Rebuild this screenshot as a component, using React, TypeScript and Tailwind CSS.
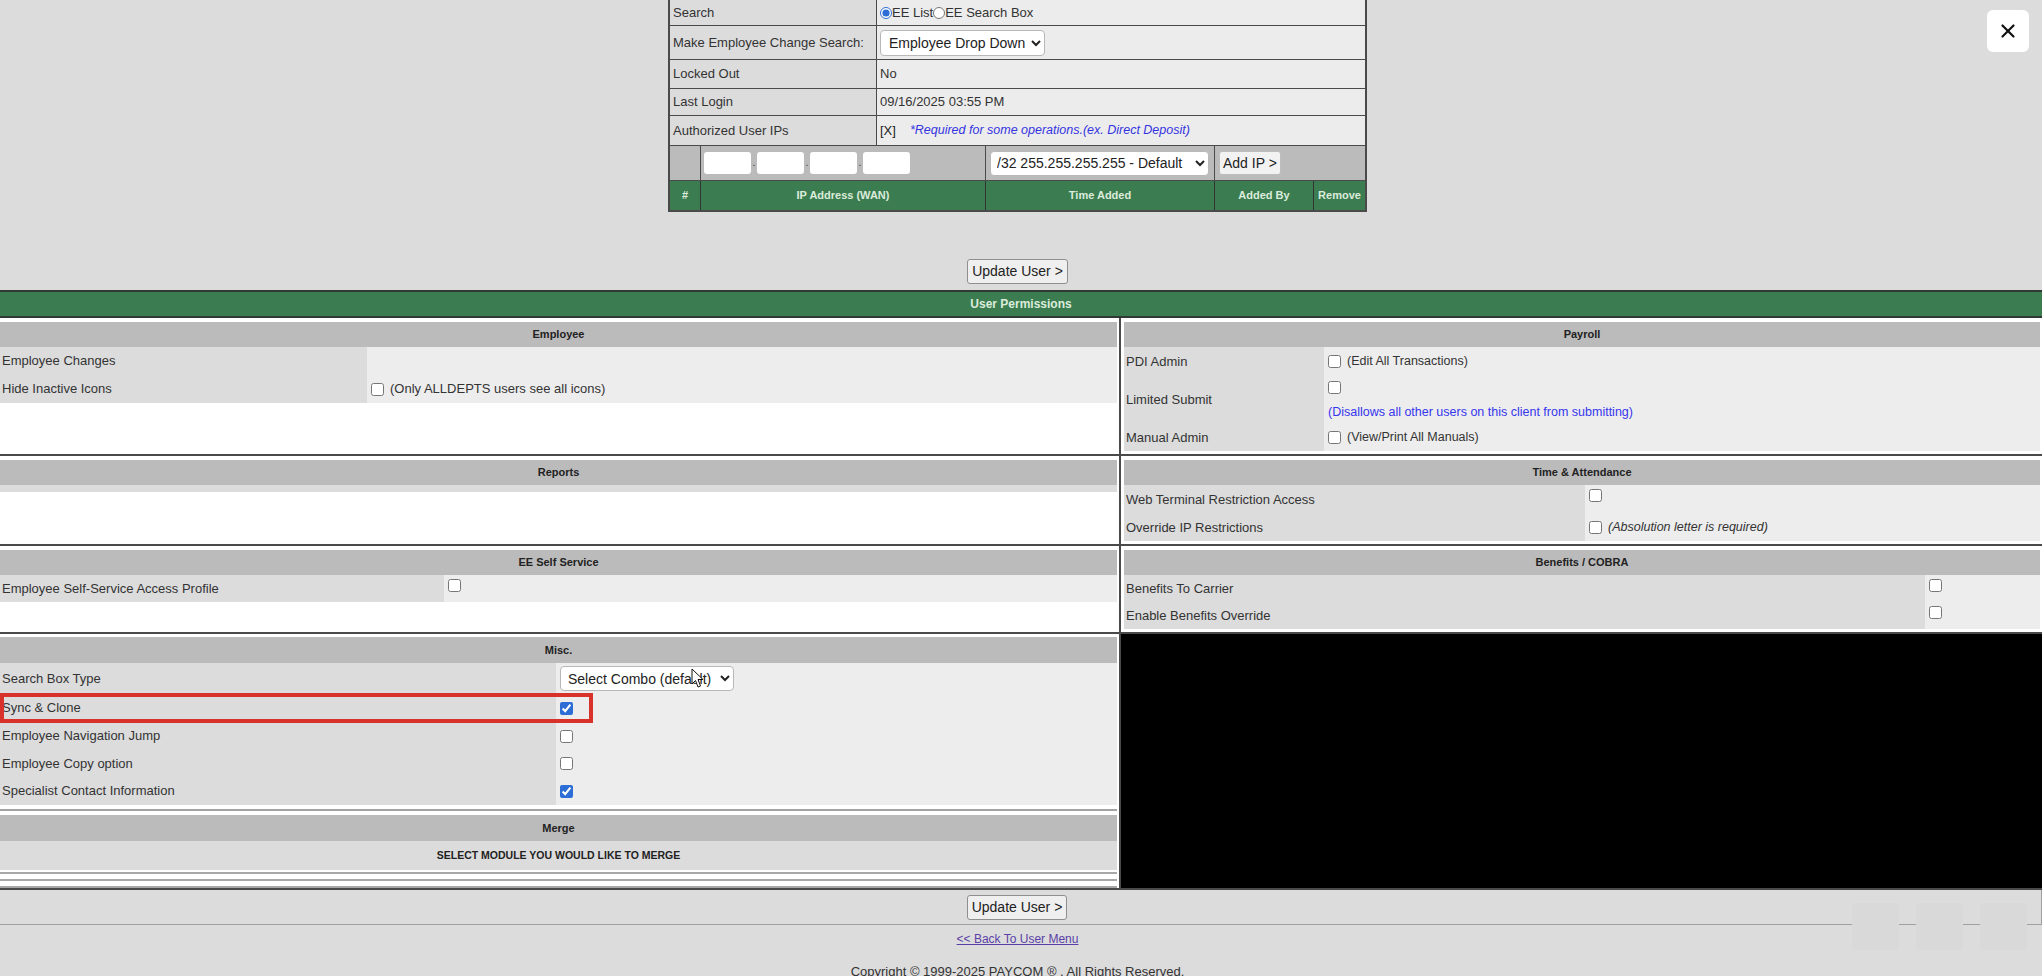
import React from 'react';
import { X } from 'lucide-react';

type RowProps = {
  label: string;
  labelW: string;
  h?: string;
  top?: boolean;
  children?: React.ReactNode;
};

const Row: React.FC<RowProps> = ({ label, labelW, h = 'h-[28px]', top = false, children }) => (
  <div className={`flex ${h}`}>
    <div className={`flex ${labelW} shrink-0 items-center bg-[#dcdcdc] pl-[2px]`}>{label}</div>
    <div className={`flex flex-1 gap-[6px] bg-[#ededed] pl-[4px] ${top ? 'items-start pt-[4px]' : 'items-center'}`}>
      {children}
    </div>
  </div>
);

const Header: React.FC<{ title: string; h?: string }> = ({ title, h = 'h-[25px]' }) => (
  <div className={`flex ${h} items-center justify-center bg-[#bbbbbb] text-[11px] font-bold text-[#222]`}>{title}</div>
);

const Check: React.FC<{ on?: boolean }> = ({ on = false }) => (
  <input type="checkbox" defaultChecked={on} className="m-0 h-[13px] w-[13px] shrink-0 accent-[#2c6ed5]" />
);

const UpdateButton = () => (
  <button className="h-[25px] rounded-[3px] border border-[#8f8f8f] bg-[#efefef] px-[4px] text-[14px] text-[#222]">
    Update User &gt;
  </button>
);

const InfoRow: React.FC<{ label: string; h: string; children?: React.ReactNode }> = ({ label, h, children }) => (
  <div className={`flex ${h} border-b border-[#4a4a4a]`}>
    <div className="flex w-[207px] shrink-0 items-center border-r border-[#4a4a4a] bg-[#dcdcdc] pl-[3px]">{label}</div>
    <div className="flex flex-1 items-center bg-[#ececec] pl-[3px]">{children}</div>
  </div>
);

export default function App() {
  return (
    <div className="relative min-h-[976px] w-full overflow-hidden bg-[#dcdcdc] font-['Liberation_Sans',Arial,sans-serif] text-[13px] text-[#333]">
      {/* user details */}
      <div className="flex justify-center pr-[7px]">
        <div className="w-[699px] border-x-2 border-b-2 border-[#4a4a4a]">
          <InfoRow label="Search" h="h-[26px]">
            <input type="radio" name="srch" defaultChecked className="m-0 h-[12px] w-[12px] accent-[#2c6ed5]" />
            <span>EE List</span>
            <input type="radio" name="srch" className="m-0 h-[12px] w-[12px]" />
            <span>EE Search Box</span>
          </InfoRow>
          <InfoRow label="Make Employee Change Search:" h="h-[34px]">
            <select className="h-[26px] w-[165px] rounded-[4px] border border-[#b8b8b8] bg-white pl-[4px] text-[14px] text-[#222]">
              <option>Employee Drop Down</option>
            </select>
          </InfoRow>
          <InfoRow label="Locked Out" h="h-[29px]">No</InfoRow>
          <InfoRow label="Last Login" h="h-[27px]">09/16/2025 03:55 PM</InfoRow>
          <InfoRow label="Authorized User IPs" h="h-[30px]">
            <span className="text-[#222]">[X]</span>
            <span className="ml-[14px] text-[12.5px] italic text-[#3434e0]">*Required for some operations.(ex. Direct Deposit)</span>
          </InfoRow>
          <div className="grid h-[35px] grid-cols-[31px_285px_229px_99px_1fr] border-b border-[#4a4a4a] bg-[#bbbbbb]">
            <div className="border-r border-[#4a4a4a]" />
            <div className="flex items-center border-r border-[#4a4a4a] pl-[3px]">
              {[0, 1, 2, 3].map((i) => (
                <React.Fragment key={i}>
                  {i > 0 && <span className="w-[6px] text-center text-[10px] leading-none">.</span>}
                  <input className="h-[22px] w-[47px] rounded-[3px] bg-white" />
                </React.Fragment>
              ))}
            </div>
            <div className="flex items-center border-r border-[#4a4a4a] pl-[4px]">
              <select className="h-[25px] w-[219px] rounded-[4px] border border-[#b8b8b8] bg-white pl-[2px] text-[14px] text-[#222]">
                <option>/32 255.255.255.255 - Default</option>
              </select>
            </div>
            <div className="flex items-center pl-[4px]">
              <button className="h-[24px] rounded-[3px] border border-[#bdbdbd] bg-[#f2f2f2] px-[3px] text-[14px] text-[#222]">Add IP &gt;</button>
            </div>
            <div />
          </div>
          <div className="grid h-[29px] grid-cols-[31px_285px_229px_99px_1fr] bg-[#3b7d50] text-[11px] font-bold text-[#dcebdc]">
            <div className="flex items-center justify-center border-r border-[#333]">#</div>
            <div className="flex items-center justify-center border-r border-[#333]">IP Address (WAN)</div>
            <div className="flex items-center justify-center border-r border-[#333]">Time Added</div>
            <div className="flex items-center justify-center border-r border-[#333]">Added By</div>
            <div className="flex items-center justify-center">Remove</div>
          </div>
        </div>
      </div>

      <div className="flex justify-center pb-[6px] pr-[7px] pt-[47px]">
        <UpdateButton />
      </div>

      <div className="flex h-[28px] items-center justify-center border-y-2 border-[#2f3a32] bg-[#3b7d50] text-[12px] font-bold text-[#dcecdc]">
        User Permissions
      </div>

      {/* permissions grid */}
      <div className="grid grid-cols-[1119px_1fr] gap-[2px] border-b-2 border-[#4a4a4a] bg-[#4a4a4a]">
        {/* Employee */}
        <div className="bg-white pb-[3px] pr-[2px] pt-[4px]">
          <Header title="Employee" />
          <Row label="Employee Changes" labelW="w-[367px]" />
          <Row label="Hide Inactive Icons" labelW="w-[367px]">
            <Check />
            <span>(Only ALLDEPTS users see all icons)</span>
          </Row>
        </div>
        {/* Payroll */}
        <div className="bg-white pb-[3px] pl-[3px] pr-[2px] pt-[4px]">
          <Header title="Payroll" />
          <Row label="PDI Admin" labelW="w-[200px]" h="h-[29px]">
            <Check />
            <span className="text-[12.5px]">(Edit All Transactions)</span>
          </Row>
          <div className="flex h-[48px]">
            <div className="flex w-[200px] shrink-0 items-center bg-[#dcdcdc] pl-[2px]">Limited Submit</div>
            <div className="flex flex-1 flex-col gap-[9px] bg-[#ededed] pl-[4px] pt-[5px]">
              <Check />
              <span className="text-[12.5px] text-[#3636ee]">(Disallows all other users on this client from submitting)</span>
            </div>
          </div>
          <Row label="Manual Admin" labelW="w-[200px]" h="h-[27px]">
            <Check />
            <span className="text-[12.5px]">(View/Print All Manuals)</span>
          </Row>
        </div>

        {/* Reports */}
        <div className="bg-white pb-[3px] pr-[2px] pt-[4px]">
          <Header title="Reports" />
          <div className="h-[7px] bg-[#dcdcdc]" />
        </div>
        {/* Time & Attendance */}
        <div className="bg-white pb-[3px] pl-[3px] pr-[2px] pt-[4px]">
          <Header title="Time & Attendance" />
          <Row label="Web Terminal Restriction Access" labelW="w-[461px]" h="h-[29px]" top>
            <Check />
          </Row>
          <Row label="Override IP Restrictions" labelW="w-[461px]" h="h-[27px]">
            <Check />
            <span className="text-[12.5px] italic">(Absolution letter is required)</span>
          </Row>
        </div>

        {/* EE Self Service */}
        <div className="bg-white pb-[3px] pr-[2px] pt-[4px]">
          <Header title="EE Self Service" />
          <Row label="Employee Self-Service Access Profile" labelW="w-[444px]" h="h-[27px]" top>
            <Check />
          </Row>
        </div>
        {/* Benefits */}
        <div className="bg-white pb-[3px] pl-[3px] pr-[2px] pt-[4px]">
          <Header title="Benefits / COBRA" />
          <Row label="Benefits To Carrier" labelW="w-[801px]" h="h-[27px]" top>
            <Check />
          </Row>
          <Row label="Enable Benefits Override" labelW="w-[801px]" h="h-[27px]" top>
            <Check />
          </Row>
        </div>

        {/* Misc + Merge */}
        <div className="bg-white pr-[2px] pt-[3px]">
          <Header title="Misc." h="h-[26px]" />
          <Row label="Search Box Type" labelW="w-[556px]" h="h-[31px]">
            <div className="relative">
              <select className="h-[25px] w-[174px] rounded-[4px] border border-[#b8b8b8] bg-white pl-[3px] text-[14px] text-[#222]">
                <option>Select Combo (default)</option>
              </select>
              <svg className="pointer-events-none absolute left-[131px] top-[2px]" width="13" height="21" viewBox="0 0 13 21">
                <path d="M1 1 L1 16 L4.5 12.5 L7 19 L9.5 18 L7 11.5 L12 11.5 Z" fill="#fff" stroke="#111" strokeWidth="1" strokeLinejoin="round" />
              </svg>
            </div>
          </Row>
          <div className="relative">
            <Row label="Sync & Clone" labelW="w-[556px]">
              <Check on />
            </Row>
            <div className="pointer-events-none absolute left-0 top-[-1px] h-[30px] w-[593px] border-4 border-[#d8322a]" />
          </div>
          <Row label="Employee Navigation Jump" labelW="w-[556px]">
            <Check />
          </Row>
          <Row label="Employee Copy option" labelW="w-[556px]" h="h-[27px]">
            <Check />
          </Row>
          <Row label="Specialist Contact Information" labelW="w-[556px]">
            <Check on />
          </Row>
          <div className="mb-[4px] mt-[4px] h-[2px] bg-[#a3a3a3]" />
          <Header title="Merge" h="h-[26px]" />
          <div className="flex h-[29px] items-center justify-center bg-[#dcdcdc] text-[10.5px] font-bold text-[#222]">
            SELECT MODULE YOU WOULD LIKE TO MERGE
          </div>
          <div className="mt-[2px] h-[2px] bg-[#a8a8a8]" />
          <div className="h-[5px]" />
          <div className="h-[2px] bg-[#a8a8a8]" />
          <div className="h-[5px]" />
          <div className="h-[2px] bg-[#a8a8a8]" />
        </div>
        <div className="bg-black" />
      </div>

      {/* footer */}
      <div className="flex h-[35px] items-center justify-center border-b border-r border-[#a0a0a0] pr-[7px]">
        <UpdateButton />
      </div>
      <div className="flex justify-center pr-[7px] pt-[5px]">
        <a href="#" className="text-[12px] text-[#5b3fa8] underline">&lt;&lt; Back To User Menu</a>
      </div>
      <div className="pr-[7px] pt-[14px] text-center text-[13px] text-[#333]">
        Copyright © 1999-2025 PAYCOM ® , All Rights Reserved.
      </div>

      {/* close */}
      <button className="absolute right-[13px] top-[10px] flex h-[42px] w-[42px] items-center justify-center rounded-[6px] bg-white">
        <X size={22} strokeWidth={2.4} color="#111" />
      </button>

      {/* faint floating toolbar */}
      <div className="absolute left-[1852px] top-[903px] flex gap-[17px]">
        <div className="h-[47px] w-[47px] rounded-[4px] bg-[#d9d9d9]" />
        <div className="h-[47px] w-[47px] rounded-[4px] bg-[#d9d9d9]" />
        <div className="h-[47px] w-[47px] rounded-[4px] bg-[#d9d9d9]" />
      </div>
    </div>
  );
}
